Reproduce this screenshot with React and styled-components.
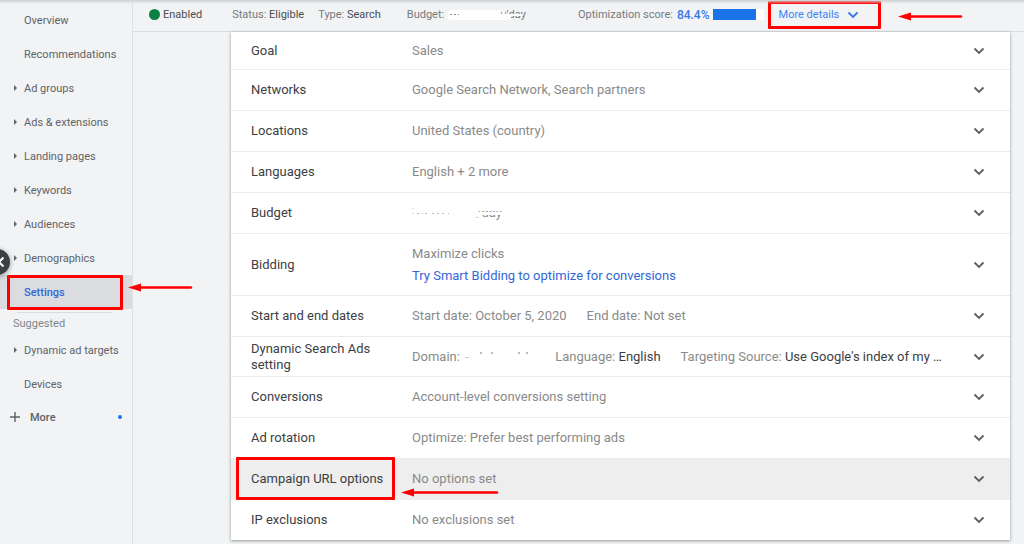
import React from 'react';
import styled, { createGlobalStyle, css } from 'styled-components';

const Global = createGlobalStyle`
  *, *::before, *::after { box-sizing: border-box; }
  body { margin: 0; background: #f1f3f4; font-family: Roboto, sans-serif; }
  button { font: inherit; color: inherit; background: none; border: 0; padding: 0; cursor: pointer; }
  a { text-decoration: none; }
`;

const Page = styled.div`
  display: flex;
  min-height: 100vh;
  position: relative;
  overflow: hidden;
`;

const TopShade = styled.div`
  position: absolute;
  inset: 0 0 auto;
  height: 4px;
  background: linear-gradient(#cfd0d1, rgba(241, 243, 244, 0));
  pointer-events: none;
`;

const Sidebar = styled.nav`
  flex: 0 0 133px;
  padding-top: 3px;
  border-right: 1px solid #dfe1e5;
  position: relative;
`;

const NavItem = styled.a`
  display: flex;
  align-items: center;
  height: 34px;
  padding-left: 24px;
  font-size: 11px;
  color: #5f6368;
  position: relative;
  ${(p) => p.$selected && css`
    background: #dadce0;
    color: #3367d6;
    font-weight: 500;
  `}
  ${(p) => p.$expandable && css`
    &::before {
      content: '';
      position: absolute;
      left: 14px;
      border-left: 3px solid #5f6368;
      border-top: 3px solid transparent;
      border-bottom: 3px solid transparent;
    }
  `}
`;

const Divider = styled.hr`
  height: 1px;
  margin: 3px 20px 0 17px;
  border: 0;
  background: #dadce0;
`;

const Suggested = styled.div`
  height: 20px;
  padding-left: 13px;
  font-size: 11px;
  line-height: 22px;
  color: #80868b;
`;

const MoreButton = styled.button`
  display: flex;
  align-items: center;
  gap: 10px;
  width: 100%;
  height: 32px;
  padding: 0 10px;
  font-size: 11px;
  font-weight: 500;
  color: #5f6368;
`;

const Dot = styled.span`
  width: 4px;
  height: 4px;
  margin-left: auto;
  border-radius: 50%;
  background: #1a73e8;
`;

const Collapse = styled.button`
  position: absolute;
  left: -16px;
  top: 249px;
  width: 26px;
  height: 26px;
  border-radius: 50%;
  background: #3c4043;
  box-shadow: 0 1px 5px rgba(0, 0, 0, 0.4);
  z-index: 1;
  svg { position: absolute; left: 12px; top: 7px; }
`;

const Main = styled.main`
  flex: 1;
  min-width: 0;
`;

const StatusBar = styled.header`
  display: flex;
  align-items: center;
  height: 32px;
  padding: 0 16px 2px;
  border-bottom: 1px solid #dadce0;
  font-size: 11px;
  color: #757a7f;
  white-space: nowrap;
`;

const Fact = styled.div`
  display: flex;
  align-items: center;
  margin-right: ${(p) => p.$after}px;
  b { font-weight: 400; color: #4a4d51; }
`;

const EnabledDot = styled.span`
  width: 11px;
  height: 11px;
  margin-right: 3px;
  border-radius: 50%;
  background: #0b8043;
`;

const Score = styled.strong`
  margin: 0 3px 0 4px;
  font-size: 12px;
  font-weight: 500;
  color: #3b78e7;
`;

const Meter = styled.div`
  width: 51px;
  height: 11px;
  background: #fff;
  &::before {
    content: '';
    display: block;
    width: ${(p) => p.$value}%;
    height: 100%;
    background: #1a73e8;
  }
`;

const MoreDetails = styled.button`
  display: flex;
  align-items: center;
  gap: 8px;
  color: #4285f4;
  position: relative;
`;

const Card = styled.section`
  margin: 0 14px 0 98px;
  background: #fff;
  box-shadow: 0 1px 3px rgba(60, 64, 67, 0.5);
`;

const rowHeights = { first: 38, normal: 41, compact: 40, tall: 62 };

const Row = styled.div`
  display: grid;
  grid-template-columns: 141px 1fr 22px;
  column-gap: 20px;
  align-items: center;
  min-height: ${(p) => rowHeights[p.$size || 'normal']}px;
  padding: 0 20px;
  border-bottom: 1px solid #ececec;
  background: ${(p) => (p.$active ? '#eee' : '#fff')};
  font-size: 13px;
  &:last-child { border-bottom: 0; }
`;

const Name = styled.div`
  position: relative;
  line-height: 16px;
  color: #3c4043;
`;

const Value = styled.div`
  display: flex;
  align-items: center;
  min-width: 0;
  color: #8a8a8a;
  line-height: 22px;
  white-space: nowrap;
  gap: ${(p) => p.$gap || 0}px;
  ${(p) => p.$stack && css`
    flex-direction: column;
    align-items: flex-start;
  `}
  a { color: #3367d6; }
  b { font-weight: 400; color: #3c4043; }
`;

const Toggle = styled.button`
  display: flex;
  justify-content: center;
`;

const Redacted = styled.span`
  position: relative;
  display: inline-flex;
  justify-content: flex-end;
  vertical-align: middle;
  width: ${(p) => p.$w}px;
  height: 16px;
  line-height: 16px;
  svg { position: absolute; left: 0; top: 0; }
`;

const Frame = styled.span`
  position: absolute;
  inset: ${(p) => p.$inset};
  border: 3px solid #f00;
  border-radius: 1px;
  pointer-events: none;
`;

const ArrowSvg = styled.svg`
  position: absolute;
  left: ${(p) => p.$left}px;
  top: ${(p) => p.$top}px;
  z-index: 2;
  pointer-events: none;
`;

const Arrow = ({ left, top, length }) => (
  <ArrowSvg $left={left} $top={top} width={length} height="9" aria-hidden="true">
    <path d="M0 4.5 13 .5v8z" fill="#f00" />
    <path d={`M11 4.5H${length - 2}`} stroke="#f00" strokeWidth="2.4" strokeLinecap="round" />
  </ArrowSvg>
);

const Chevron = ({ color = '#616161' }) => (
  <svg width="12" height="8" viewBox="0 0 12 8" fill="none" aria-hidden="true">
    <path d="M1.5 1.5 6 6l4.5-4.5" stroke={color} strokeWidth="1.9" />
  </svg>
);

const navItems = [
  ['Overview'],
  ['Recommendations'],
  ['Ad groups', true],
  ['Ads & extensions', true],
  ['Landing pages', true],
  ['Keywords', true],
  ['Audiences', true],
  ['Demographics', true],
];

const Setting = ({ name, size, active, gap, stack, mark, children }) => (
  <Row $size={size} $active={active}>
    <Name>{name}{mark}</Name>
    <Value $gap={gap} $stack={stack}>{children}</Value>
    <Toggle aria-label={`Expand ${name}`}><Chevron /></Toggle>
  </Row>
);

export default function App() {
  return (
    <Page>
      <Global />
      <Sidebar>
        {navItems.map(([label, expandable]) => (
          <NavItem key={label} href="#" $expandable={expandable}>{label}</NavItem>
        ))}
        <NavItem href="#" $selected>
          Settings
          <Frame $inset="0 9px -1px 7px" />
          <Arrow left={128} top={8} length={65} />
        </NavItem>
        <Divider />
        <Suggested>Suggested</Suggested>
        <NavItem href="#" $expandable>Dynamic ad targets</NavItem>
        <NavItem href="#">Devices</NavItem>
        <MoreButton>
          <svg width="10" height="10" aria-hidden="true">
            <path d="M5 0v10M0 5h10" stroke="#5f6368" strokeWidth="1.4" />
          </svg>
          More
          <Dot />
        </MoreButton>
        <Collapse aria-label="Collapse navigation">
          <svg width="10" height="12" fill="none" aria-hidden="true">
            <path d="M7.500 1.500 3 6l4.500 4.500" stroke="#fff" strokeWidth="2" />
          </svg>
        </Collapse>
      </Sidebar>
      <Main>
        <StatusBar>
          <Fact $after={30}><EnabledDot /><b>Enabled</b></Fact>
          <Fact $after={14}>Status:&nbsp;<b>Eligible</b></Fact>
          <Fact $after={26}>Type:&nbsp;<b>Search</b></Fact>
          <Fact $after={52}>
            Budget:&nbsp;
            <Redacted $w={79}>
              /day
              <svg width="79" height="16" aria-hidden="true">
                <path d="M2 3h51l2 2h5v2h16v2H64v3l-4 1H2l-1-2V4z" fill="#fff" />
                <path d="M3 7.500h2m2 0h2m2 0h1M54 5l1 2m3-2 1 2" stroke="#8d9195" />
              </svg>
            </Redacted>
          </Fact>
          <Fact $after={15}>
            Optimization score:<Score>84.4%</Score><Meter $value={85} />
          </Fact>
          <MoreDetails>
            More details <Chevron color="#3b78e7" />
            <Frame $inset="-7px -22px -8px -11px" />
            <Arrow left={119} top={4} length={65} />
          </MoreDetails>
        </StatusBar>
        <Card>
          <Setting name="Goal" size="first">Sales</Setting>
          <Setting name="Networks">Google Search Network, Search partners</Setting>
          <Setting name="Locations">United States (country)</Setting>
          <Setting name="Languages">English + 2 more</Setting>
          <Setting name="Budget">
            <Redacted $w={90}>
              /day
              <svg width="90" height="16" aria-hidden="true">
                <path d="M0 0h90v6H0zM0 7h90v3H0zM64 10h6v2h-6z" fill="#fff" />
                <path d="M1 3v1m0 4v1M5 8.500h2m3 0h1m2 0h2m5 0h2m3 0h2m3 0h2m4 0h1" stroke="#bbb" />
              </svg>
            </Redacted>
          </Setting>
          <Setting name="Bidding" size="tall" stack>
            <span>Maximize clicks</span>
            <a href="#">Try Smart Bidding to optimize for conversions</a>
          </Setting>
          <Setting name="Start and end dates" gap={20}>
            <span>Start date: October 5, 2020</span>
            <span>End date: Not set</span>
          </Setting>
          <Setting name="Dynamic Search Ads setting" size="compact" gap={20}>
            <span>
              Domain:{' '}
              <Redacted $w={72}>
                <svg width="72" height="16" aria-hidden="true">
                  <path d="M2 8.500h4" stroke="#ccc" />
                  <path d="M18 3v2M29 3v2M56 3v2M64 3v2" stroke="#777" />
                </svg>
              </Redacted>
            </span>
            <span>Language: <b>English</b></span>
            <span>Targeting Source: <b>Use Google's index of my …</b></span>
          </Setting>
          <Setting name="Conversions">Account-level conversions setting</Setting>
          <Setting name="Ad rotation">Optimize: Prefer best performing ads</Setting>
          <Setting
            name="Campaign URL options"
            active
            mark={<><Frame $inset="-14px -3px -13px -15px" /><Arrow left={150} top={17} length={98} /></>}
          >
            No options set
          </Setting>
          <Setting name="IP exclusions" size="compact">No exclusions set</Setting>
        </Card>
      </Main>
      <TopShade />
    </Page>
  );
}
